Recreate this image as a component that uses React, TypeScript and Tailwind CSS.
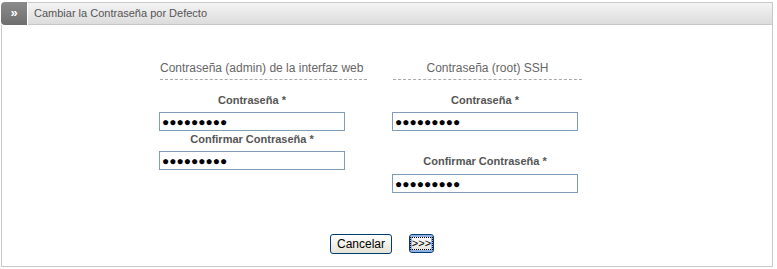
import React from "react";

const dots = "●●●●●●●●●";

const Field = ({ label, className = "", gap = "mt-[5px]" }: { label: string; className?: string; gap?: string }) => (
  <div className={className}>
    <div className="w-[186px] text-center text-[11px] leading-[14px] font-bold text-[#555]">{label}</div>
    <input
      readOnly
      value={dots}
      className={`${gap} block w-[186px] h-[19px] border border-[#7f9db9] bg-white px-[2px] text-[12px] leading-[17px] text-black outline-none`}
    />
  </div>
);

export default function App() {
  return (
    <div className="w-[777px] h-[269px] bg-white pt-[2px] pl-[1px]" style={{ fontFamily: '"Liberation Sans", Arial, sans-serif' }}>
      <div className="w-[772px]">
        {/* Header */}
        <div className="flex h-[23px]">
          <div className="w-[27px] rounded-l-[4px] bg-gradient-to-b from-[#8c8c8c] to-[#6e6e6e] border-r border-white flex items-center justify-center text-white text-[13px] font-bold leading-none pb-[2px]">
            »
          </div>
          <div className="flex-1 flex items-center border-t border-r border-b border-[#c8c8c8] bg-gradient-to-b from-[#f4f4f4] to-[#dcdcdc] pl-[6px] text-[11px] text-[#555]">
            Cambiar la Contraseña por Defecto
          </div>
        </div>

        {/* Body */}
        <div className="h-[242px] border-l border-r border-b border-[#c8c8c8] flex flex-col">
          <div className="flex pl-[157px] pt-[36px]">
            {/* Left column */}
            <div className="w-[208px]">
              <div className="ml-[1px] border-b border-dashed border-[#aaa] pb-[4px] text-[12px] leading-[14px] text-[#666] whitespace-nowrap">
                Contraseña (admin) de la interfaz web
              </div>
              <Field label="Contraseña *" className="mt-[13px]" />
              <Field label="Confirmar Contraseña *" className="mt-[1px]" />
            </div>

            {/* Right column */}
            <div className="w-[190px] ml-[25px]">
              <div className="ml-[1px] border-b border-dashed border-[#aaa] pb-[4px] text-center text-[12px] leading-[14px] text-[#666]">
                Contraseña (root) SSH
              </div>
              <Field label="Contraseña *" className="mt-[13px]" />
              <Field label="Confirmar Contraseña *" className="mt-[23px]" gap="mt-[6px]" />
            </div>
          </div>

          {/* Buttons */}
          <div className="flex items-start pl-[328px] mt-[41px]">
            <button className="w-[62px] h-[20px] rounded-[3px] border border-[#003c74] bg-gradient-to-b from-white to-[#e6e3d6] text-[12px] leading-none text-black">
              Cancelar
            </button>
            <button className="ml-[17px] w-[25px] h-[19px] rounded-[3px] border border-[#003c74] bg-gradient-to-b from-[#fefefe] to-[#e3e1d8] shadow-[inset_0_0_0_2px_#8fb2e6] flex items-center justify-center">
              <span className="border border-dotted border-black px-[1px] text-[11px] leading-[11px] text-black">&gt;&gt;&gt;</span>
            </button>
          </div>
        </div>
      </div>
    </div>
  );
}
